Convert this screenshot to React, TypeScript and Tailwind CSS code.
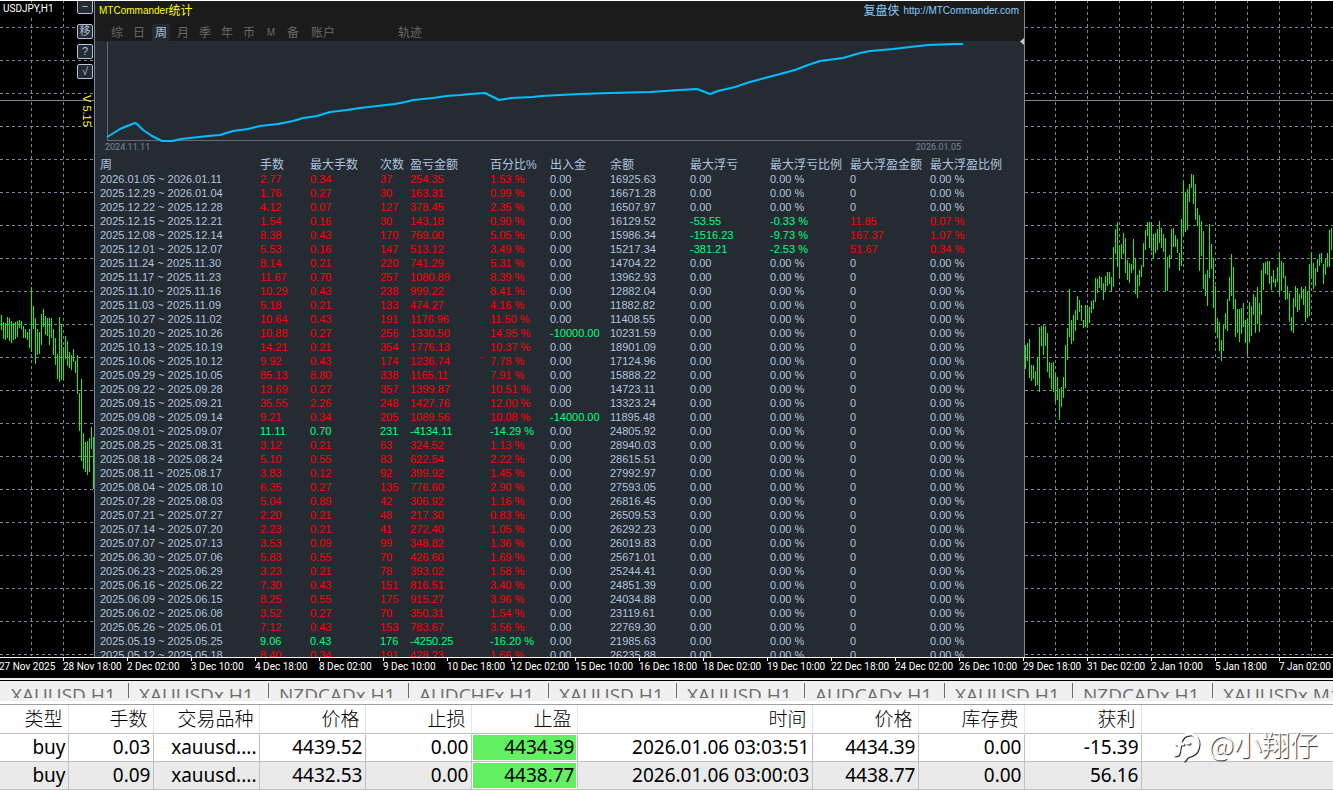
import React from 'react';

type Bar = [number, number];

// high / low of each bar, one bar every 2px
const leftBars: Bar[] = [
  [315, 330], [322, 339], [323, 340], [317, 338], [318, 341], [321, 343], [323, 340], [322, 339],
  [321, 337], [320, 328], [321, 329], [326, 338], [329, 338], [332, 340], [329, 348], [287, 352],
  [306, 329], [318, 364], [329, 355], [332, 354], [314, 345], [309, 327], [316, 335], [318, 336],
  [318, 345], [318, 338], [329, 355], [338, 365], [354, 379], [317, 382], [325, 380], [347, 380],
  [336, 359], [341, 366], [352, 368], [355, 370], [349, 362], [361, 373], [355, 394], [393, 431],
  [379, 461], [433, 469], [442, 472], [441, 475], [438, 472], [427, 449], [437, 489],
];

const rightBars: Bar[] = [
  [345, 369], [343, 361], [339, 378], [365, 381], [365, 379], [371, 386], [357, 385], [327, 392],
  [326, 346], [325, 355], [326, 346], [333, 372], [362, 378], [363, 389], [362, 392], [373, 402],
  [377, 400], [389, 420], [387, 407], [377, 398], [345, 388], [328, 360], [289, 337], [320, 344],
  [315, 341], [310, 331], [296, 320], [300, 312], [305, 321], [320, 328], [305, 327], [305, 328],
  [307, 323], [301, 313], [300, 309], [278, 302], [279, 293], [276, 288], [277, 290], [283, 300],
  [276, 292], [272, 286], [272, 284], [277, 292], [247, 287], [229, 254], [222, 267], [245, 278],
  [244, 258], [233, 254], [238, 273], [260, 280], [263, 283], [264, 273], [239, 270], [258, 294],
  [275, 298], [270, 286], [265, 277], [243, 267], [230, 250], [222, 236], [222, 248], [222, 251],
  [234, 259], [233, 253], [229, 250], [221, 243], [228, 248], [234, 252], [238, 291], [257, 291],
  [255, 268], [229, 259], [228, 247], [235, 247], [239, 253], [253, 271], [219, 266], [181, 235],
  [192, 232], [189, 230], [184, 202], [174, 188], [175, 204], [184, 220], [208, 226], [215, 271],
  [221, 256], [231, 289], [274, 296], [270, 306], [224, 278], [244, 269], [259, 308], [286, 332],
  [318, 338], [322, 351], [340, 361], [325, 351], [313, 329], [299, 331], [277, 301], [254, 296],
  [267, 309], [299, 337], [309, 333], [309, 342], [308, 334], [303, 327], [320, 343], [318, 354],
  [302, 343], [306, 336], [294, 315], [297, 333], [287, 324], [303, 332], [270, 315], [263, 290],
  [262, 274], [261, 275], [261, 284], [276, 290], [270, 283], [279, 287], [267, 282], [252, 294],
  [261, 291], [263, 278], [276, 300], [286, 299], [293, 322], [317, 331], [298, 333], [286, 307],
  [288, 312], [294, 310], [287, 299], [289, 305], [286, 322], [292, 318], [264, 316], [252, 279],
  [263, 289], [268, 286], [259, 272], [254, 266], [253, 263], [264, 284], [259, 275], [253, 267],
  [230, 267], [228, 250],
];

const balanceLine =
  '107,137 112,134 120,129 127,126 135,123 137,124 143,130 152,136 162,141 172,141 181,139 190,138 208,136 220,135 233,131 248,129 260,126 278,124 293,121 303,118 317,116 330,112 347,110 360,108 377,106 395,104 405,102 413,100 433,98 446,96 460,95 470,94 485,93 491,96 499,100 511,98 532,97 542,96 560,95 580,94 610,93 650,92 680,90 697,89 710,94 718,91 735,87 750,82 765,78 780,74 795,70 808,65 820,61 843,58 860,53 870,51 893,49 910,47 928,45 955,44 963,44';

const headers = ['周', '手数', '最大手数', '次数', '盈亏金额', '百分比%', '出入金', '余额', '最大浮亏', '最大浮亏比例', '最大浮盈金额', '最大浮盈比例'];

const noFloat = ['0.00', '0.00 %', '0', '0.00 %'];

const weeks: string[][] = [
  ['2026.01.05 ~ 2026.01.11', '2.77', '0.34', '37', '254.35', '1.53 %', '0.00', '16925.63', ...noFloat],
  ['2025.12.29 ~ 2026.01.04', '1.76', '0.27', '30', '163.31', '0.99 %', '0.00', '16671.28', ...noFloat],
  ['2025.12.22 ~ 2025.12.28', '4.12', '0.07', '127', '378.45', '2.35 %', '0.00', '16507.97', ...noFloat],
  ['2025.12.15 ~ 2025.12.21', '1.54', '0.16', '30', '143.18', '0.90 %', '0.00', '16129.52', '-53.55', '-0.33 %', '11.85', '0.07 %'],
  ['2025.12.08 ~ 2025.12.14', '8.38', '0.43', '170', '769.00', '5.05 %', '0.00', '15986.34', '-1516.23', '-9.73 %', '167.37', '1.07 %'],
  ['2025.12.01 ~ 2025.12.07', '5.53', '0.16', '147', '513.12', '3.49 %', '0.00', '15217.34', '-381.21', '-2.53 %', '51.67', '0.34 %'],
  ['2025.11.24 ~ 2025.11.30', '8.14', '0.21', '220', '741.29', '5.31 %', '0.00', '14704.22', ...noFloat],
  ['2025.11.17 ~ 2025.11.23', '11.67', '0.70', '257', '1080.89', '8.39 %', '0.00', '13962.93', ...noFloat],
  ['2025.11.10 ~ 2025.11.16', '10.29', '0.43', '238', '999.22', '8.41 %', '0.00', '12882.04', ...noFloat],
  ['2025.11.03 ~ 2025.11.09', '5.18', '0.21', '133', '474.27', '4.16 %', '0.00', '11882.82', ...noFloat],
  ['2025.10.27 ~ 2025.11.02', '10.64', '0.43', '191', '1176.96', '11.50 %', '0.00', '11408.55', ...noFloat],
  ['2025.10.20 ~ 2025.10.26', '10.88', '0.27', '256', '1330.50', '14.95 %', '-10000.00', '10231.59', ...noFloat],
  ['2025.10.13 ~ 2025.10.19', '14.21', '0.21', '354', '1776.13', '10.37 %', '0.00', '18901.09', ...noFloat],
  ['2025.10.06 ~ 2025.10.12', '9.92', '0.43', '174', '1236.74', '7.78 %', '0.00', '17124.96', ...noFloat],
  ['2025.09.29 ~ 2025.10.05', '85.13', '8.80', '338', '1165.11', '7.91 %', '0.00', '15888.22', ...noFloat],
  ['2025.09.22 ~ 2025.09.28', '13.69', '0.27', '357', '1399.87', '10.51 %', '0.00', '14723.11', ...noFloat],
  ['2025.09.15 ~ 2025.09.21', '35.55', '2.26', '248', '1427.76', '12.00 %', '0.00', '13323.24', ...noFloat],
  ['2025.09.08 ~ 2025.09.14', '9.21', '0.34', '205', '1089.56', '10.08 %', '-14000.00', '11895.48', ...noFloat],
  ['2025.09.01 ~ 2025.09.07', '11.11', '0.70', '231', '-4134.11', '-14.29 %', '0.00', '24805.92', ...noFloat],
  ['2025.08.25 ~ 2025.08.31', '3.12', '0.21', '63', '324.52', '1.13 %', '0.00', '28940.03', ...noFloat],
  ['2025.08.18 ~ 2025.08.24', '5.10', '0.55', '83', '622.54', '2.22 %', '0.00', '28615.51', ...noFloat],
  ['2025.08.11 ~ 2025.08.17', '3.83', '0.12', '92', '399.92', '1.45 %', '0.00', '27992.97', ...noFloat],
  ['2025.08.04 ~ 2025.08.10', '6.35', '0.27', '135', '776.60', '2.90 %', '0.00', '27593.05', ...noFloat],
  ['2025.07.28 ~ 2025.08.03', '5.04', '0.89', '42', '306.92', '1.16 %', '0.00', '26816.45', ...noFloat],
  ['2025.07.21 ~ 2025.07.27', '2.20', '0.21', '48', '217.30', '0.83 %', '0.00', '26509.53', ...noFloat],
  ['2025.07.14 ~ 2025.07.20', '2.23', '0.21', '41', '272.40', '1.05 %', '0.00', '26292.23', ...noFloat],
  ['2025.07.07 ~ 2025.07.13', '3.53', '0.09', '99', '348.82', '1.36 %', '0.00', '26019.83', ...noFloat],
  ['2025.06.30 ~ 2025.07.06', '5.83', '0.55', '70', '426.60', '1.69 %', '0.00', '25671.01', ...noFloat],
  ['2025.06.23 ~ 2025.06.29', '3.23', '0.21', '78', '393.02', '1.58 %', '0.00', '25244.41', ...noFloat],
  ['2025.06.16 ~ 2025.06.22', '7.30', '0.43', '151', '816.51', '3.40 %', '0.00', '24851.39', ...noFloat],
  ['2025.06.09 ~ 2025.06.15', '8.25', '0.55', '175', '915.27', '3.96 %', '0.00', '24034.88', ...noFloat],
  ['2025.06.02 ~ 2025.06.08', '3.52', '0.27', '70', '350.31', '1.54 %', '0.00', '23119.61', ...noFloat],
  ['2025.05.26 ~ 2025.06.01', '7.12', '0.43', '153', '783.67', '3.56 %', '0.00', '22769.30', ...noFloat],
  ['2025.05.19 ~ 2025.05.25', '9.06', '0.43', '176', '-4250.25', '-16.20 %', '0.00', '21985.63', ...noFloat],
  ['2025.05.12 ~ 2025.05.18', '8.40', '0.34', '191', '428.23', '1.66 %', '0.00', '26235.88', ...noFloat],
];

const times = [
  '27 Nov 2025', '28 Nov 18:00', '2 Dec 02:00', '3 Dec 10:00', '4 Dec 18:00', '8 Dec 02:00', '9 Dec 10:00',
  '10 Dec 18:00', '12 Dec 02:00', '15 Dec 10:00', '16 Dec 18:00', '18 Dec 02:00', '19 Dec 10:00', '22 Dec 18:00',
  '24 Dec 02:00', '26 Dec 10:00', '29 Dec 18:00', '31 Dec 02:00', '2 Jan 10:00', '5 Jan 18:00', '7 Jan 02:00',
];

const symbols = [
  'XAUUSD,H1', 'XAUUSDx,H1', 'NZDCADx,H1', 'AUDCHFx,H1', 'XAUUSD,H1', 'XAUUSD,H1', 'AUDCADx,H1', 'XAUUSD,H1', 'NZDCADx,H1', 'XAUUSDx,M15',
];

const periods = ['综', '日', '周', '月', '季', '年', '币', 'M', '备'];

const orderHeaders = ['类型', '手数', '交易品种', '价格', '止损', '止盈', '时间', '价格', '库存费', '获利'];

const orders = [
  ['buy', '0.03', 'xauusd....', '4439.52', '0.00', '4434.39', '2026.01.06 03:03:51', '4434.39', '0.00', '-15.39'],
  ['buy', '0.09', 'xauusd....', '4432.53', '0.00', '4438.77', '2026.01.06 03:00:03', '4438.77', '0.00', '56.16'],
];

const cellColor = (row: string[], i: number) => {
  if (i >= 1 && i <= 5) return row[4].startsWith('-') ? 'text-[#00ff7f]' : 'text-[#ff0000]';
  if (row[i].startsWith('-')) return 'text-[#00ff7f]';
  if (i >= 10 && row[10] !== '0') return 'text-[#ff0000]';
  return 'text-[#b0c4de]';
};

const PriceChart: React.FC<{ bars: Bar[]; barStart: number; gridStart: number }> = ({ bars, barStart, gridStart }) => (
  <svg className="block h-full w-full" shapeRendering="crispEdges" aria-hidden="true">
    <g transform="translate(0 -1)">
      {Array.from({ length: 40 }, (_, i) => (
        <rect key={`h${i}`} x="0" y={27 + i * 33} width="100%" height="1" fill="url(#dashH)" />
      ))}
      {Array.from({ length: 40 }, (_, i) => (
        <rect key={`v${i}`} x={gridStart + i * 32} y="0" width="1" height="100%" fill="url(#dashV)" />
      ))}
      <rect x="0" y="100" width="100%" height="1" fill="#778899" />
      {bars.map(([high, low], i) => (
        <rect key={i} x={barStart + i * 2} y={high} width="1" height={low - high} fill="#00ff00" />
      ))}
    </g>
    <defs>
      <pattern id="dashH" width="6" height="1" patternUnits="userSpaceOnUse">
        <rect width="3" height="1" fill="#778899" />
      </pattern>
      <pattern id="dashV" width="1" height="6" patternUnits="userSpaceOnUse">
        <rect width="1" height="3" fill="#778899" />
      </pattern>
    </defs>
  </svg>
);

const toolButton = 'flex h-[15px] w-4 items-center justify-center rounded-xs border border-[#b0c4de] bg-[#252b33] text-[11px] leading-none text-[#b0c4de]';

const StatsPanel: React.FC = () => (
  <section className="relative w-[931px] shrink-0 overflow-hidden border-x border-[#778899] bg-[#252b33]">
    <header className="h-10 bg-[#1b1b1b]">
      <div className="flex h-5 items-center justify-between pr-[5px] pl-1 text-[10px] leading-none">
        <h1 className="flex items-center text-[#ffff00]">
          MTCommander<span className="text-[12px]">统计</span>
        </h1>
        <a href="http://MTCommander.com" className="flex items-center gap-1 text-[#87cefa]">
          <span className="text-[12px]">复盘侠</span> http://MTCommander.com
        </a>
      </div>
      <nav className="flex h-5 items-end pl-[11px] text-[12px] leading-none text-[#696969]">
        {periods.map((p) => (
          <button
            key={p}
            className={p === '周' ? 'mx-0.5 h-[17px] w-[18px] rounded-xs bg-[#252b33] text-[#b0c4de]' : p === 'M' ? 'h-[17px] w-[22px] text-[10px]' : 'h-[17px] w-[22px]'}
          >
            {p}
          </button>
        ))}
        <button className="ml-[7px] h-[17px]">账户</button>
        <button className="ml-[63px] h-[17px]">轨迹</button>
      </nav>
    </header>

    {/* collapse handle */}
    <svg className="absolute top-[37px] right-0 h-[7px] w-1" viewBox="0 0 4 7" aria-hidden="true">
      <path d="M4 0V7L0 3.5Z" fill="#c8c8c8" />
    </svg>

    <svg className="block h-[101px] w-full" role="img" aria-label="余额">
      <g transform="translate(-95 -41)">
        <rect x="107" y="42" width="1" height="99" fill="#696969" />
        <rect x="107" y="140" width="855" height="1" fill="#696969" />
        <polyline points={balanceLine} fill="none" stroke="#00bfff" strokeWidth="2" strokeLinejoin="round" />
      </g>
    </svg>
    <div className="mb-1.5 flex h-[11px] w-[866px] items-center justify-between pl-[10px] font-[Roboto,sans-serif] text-[9px] leading-none text-[#778899]">
      <span>2024.11.11</span>
      <span>2026.01.05</span>
    </div>

    <table className="ml-[5px] w-[924px] table-fixed text-left text-[11px] leading-[14px]">
      <colgroup>
        <col className="w-[160px]" />
        <col className="w-[50px]" />
        <col className="w-[70px]" />
        <col className="w-[30px]" />
        <col className="w-[80px]" />
        <col className="w-[60px]" />
        <col className="w-[60px]" />
        <col className="w-[80px]" />
        <col className="w-[80px]" />
        <col className="w-[80px]" />
        <col className="w-[80px]" />
        <col />
      </colgroup>
      <thead>
        <tr className="h-[13px] text-[12px] leading-[13px] text-[#b0c4de]">
          {headers.map((h) => (
            <th key={h} className="p-0 font-normal whitespace-nowrap">{h}</th>
          ))}
        </tr>
      </thead>
      <tbody>
        {weeks.map((row) => (
          <tr key={row[0]} className="h-[14px]">
            {row.map((cell, i) => (
              <td key={i} className={`p-0 whitespace-nowrap ${cellColor(row, i)}`}>{cell}</td>
            ))}
          </tr>
        ))}
      </tbody>
    </table>
  </section>
);

const Orders: React.FC = () => (
  <div className="relative h-[87px] shrink-0 overflow-hidden border-t border-[#a0a0a0] bg-white">
    <table className="w-full table-fixed border-collapse text-right font-['Noto_Sans','Noto_Sans_CJK_SC',sans-serif] text-[19px] leading-[27px] text-black">
      <colgroup>
        <col className="w-[68px]" />
        <col className="w-[85px]" />
        <col className="w-[106px]" />
        <col className="w-[106px]" />
        <col className="w-[106px]" />
        <col className="w-[106px]" />
        <col className="w-[235px]" />
        <col className="w-[106px]" />
        <col className="w-[106px]" />
        <col className="w-[117px]" />
        <col />
      </colgroup>
      <thead>
        <tr className="h-7 border-b border-[#c0c0c0] leading-[25px]">
          {orderHeaders.map((h, i) => (
            <th key={i} className="border-r border-[#e5e5e5] p-0 pr-[5px] pb-0.5 font-['Noto_Sans_CJK_SC',sans-serif] font-light">{h}</th>
          ))}
          <th className="p-0" />
        </tr>
      </thead>
      <tbody>
        {orders.map((row, r) => (
          <tr key={r} className="h-7 border-b border-[#c0c0c0] odd:bg-white even:bg-[#eaeaea]">
            {row.map((cell, i) => (
              <td key={i} className="border-r border-[#c0c0c0] p-0">
                {i === 5 ? (
                  <div className="border border-white bg-[#61f05f] pr-px leading-[25px]">{cell}</div>
                ) : (
                  <div className="pr-[2px]">{cell}</div>
                )}
              </td>
            ))}
            <td className="p-0" />
          </tr>
        ))}
      </tbody>
    </table>

    {/* watermark */}
    <div className="absolute top-[21px] right-[15px] flex items-center gap-1.5 text-white">
      <svg className="h-9 w-8 drop-shadow-[1px_1px_0px_#333333]" viewBox="0 0 32 36" fill="none" stroke="currentColor" strokeWidth="3" strokeLinecap="round" aria-hidden="true">
        <path d="M4 29C7 29 8 27 8 23L9 17C10 11 14 8 19 8M5 18H12M16 17H18" />
        <path d="M21 8C27 11 28 17 26 23C24 29 19 29 16 30L13 34" />
      </svg>
      <span className="font-['Noto_Sans_CJK_SC',sans-serif] text-[28px] leading-8 font-light text-shadow-[1px_1px_1px_#222222]">@小翔仔</span>
    </div>
  </div>
);

const App: React.FC = () => {
  return (
    <div className="flex h-screen flex-col overflow-hidden bg-black font-['Liberation_Sans','Noto_Sans_CJK_SC',sans-serif]">
      <main className="flex min-h-0 flex-1 border-t border-white">
        <div className="relative w-[94px] shrink-0 overflow-hidden">
          <PriceChart bars={leftBars} barStart={1} gridStart={31} />
          <span className="absolute top-0.5 left-[3px] bg-black font-[Roboto,sans-serif] text-[10px] leading-3 text-white">USDJPY,H1</span>
          <div className="absolute -top-[2px] right-px flex flex-col gap-[5px]">
            <button className={toolButton}>−</button>
            <button className={`${toolButton} mt-[5px]`}>移</button>
            <button className={toolButton}>?</button>
            <button className={toolButton}>√</button>
          </div>
          <span className="absolute top-[94px] right-px text-[11px] leading-3 text-[#ffff00] [writing-mode:vertical-rl]">V 5.15</span>
        </div>
        <StatsPanel />
        <div className="min-w-0 flex-1 overflow-hidden">
          <PriceChart bars={rightBars} barStart={0} gridStart={30} />
        </div>
      </main>

      {/* time axis */}
      <div className="h-[21px] shrink-0 overflow-hidden border-t border-white">
        <div className="-ml-px flex font-[Roboto,sans-serif] text-[10px] leading-3 text-white">
          {times.map((t) => (
            <div key={t} className="w-16 shrink-0 whitespace-nowrap">
              <div className="h-[3px] w-px bg-white" />
              {t}
            </div>
          ))}
        </div>
      </div>

      <div className="h-0.5 shrink-0 bg-[#f0f0f0]" />
      <div className="flex h-[21px] shrink-0 overflow-hidden border-t border-black bg-[#f0f0f0] pt-0.5 pl-px">
        {symbols.map((s, i) => (
          <button
            key={i}
            className={`h-[15px] shrink-0 overflow-hidden border-r border-[#6d6d6d] pl-[10px] text-left font-['Open_Sans',sans-serif] text-[19px] leading-6 whitespace-nowrap text-[#6d6d6d] ${s.includes('x') ? 'w-[140px]' : 'w-32'}`}
          >
            {s}
          </button>
        ))}
      </div>
      <div className="h-[3px] shrink-0 bg-white" />
      <Orders />
    </div>
  );
};

export default App;
